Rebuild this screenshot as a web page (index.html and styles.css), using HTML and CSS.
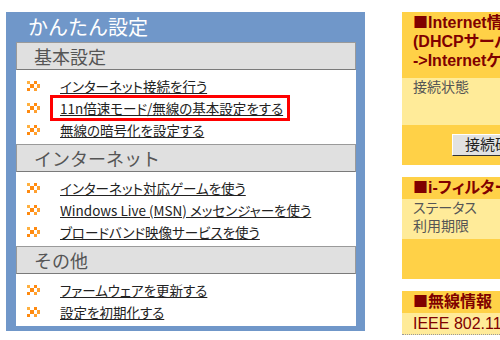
FILE: index.html
```html
<!DOCTYPE html>
<html lang="ja">
<head>
    <meta charset="UTF-8">
    <title>かんたん設定</title>
    <link rel="stylesheet" href="styles.css">
</head>
<body>
    <div class="page">
        <div class="easy">
            <div class="easy-title">かんたん設定</div>
            <div class="menu">
                <div class="sec">基本設定</div>
                <ul class="items">
                    <li><svg class="dot" viewBox="0 0 4 3"><rect x="0" y="0" width="1" height="1" fill="#ffb040"/><rect x="2" y="0" width="1" height="1" fill="#ff8a10"/><rect x="1" y="1" width="1" height="1" fill="#ff8a10"/><rect x="3" y="1" width="1" height="1" fill="#ffa030"/><rect x="0" y="2" width="1" height="1" fill="#ff8a10"/><rect x="2" y="2" width="1" height="1" fill="#ffa030"/></svg><a href="#">インターネット接続を行う</a></li>
                    <li><svg class="dot" viewBox="0 0 4 3"><rect x="0" y="0" width="1" height="1" fill="#ffb040"/><rect x="2" y="0" width="1" height="1" fill="#ff8a10"/><rect x="1" y="1" width="1" height="1" fill="#ff8a10"/><rect x="3" y="1" width="1" height="1" fill="#ffa030"/><rect x="0" y="2" width="1" height="1" fill="#ff8a10"/><rect x="2" y="2" width="1" height="1" fill="#ffa030"/></svg><span class="mark"><a href="#">11n倍速モード/無線の基本設定をする</a></span></li>
                    <li><svg class="dot" viewBox="0 0 4 3"><rect x="0" y="0" width="1" height="1" fill="#ffb040"/><rect x="2" y="0" width="1" height="1" fill="#ff8a10"/><rect x="1" y="1" width="1" height="1" fill="#ff8a10"/><rect x="3" y="1" width="1" height="1" fill="#ffa030"/><rect x="0" y="2" width="1" height="1" fill="#ff8a10"/><rect x="2" y="2" width="1" height="1" fill="#ffa030"/></svg><a href="#">無線の暗号化を設定する</a></li>
                </ul>
                <div class="sec">インターネット</div>
                <ul class="items">
                    <li><svg class="dot" viewBox="0 0 4 3"><rect x="0" y="0" width="1" height="1" fill="#ffb040"/><rect x="2" y="0" width="1" height="1" fill="#ff8a10"/><rect x="1" y="1" width="1" height="1" fill="#ff8a10"/><rect x="3" y="1" width="1" height="1" fill="#ffa030"/><rect x="0" y="2" width="1" height="1" fill="#ff8a10"/><rect x="2" y="2" width="1" height="1" fill="#ffa030"/></svg><a href="#">インターネット対応ゲームを使う</a></li>
                    <li><svg class="dot" viewBox="0 0 4 3"><rect x="0" y="0" width="1" height="1" fill="#ffb040"/><rect x="2" y="0" width="1" height="1" fill="#ff8a10"/><rect x="1" y="1" width="1" height="1" fill="#ff8a10"/><rect x="3" y="1" width="1" height="1" fill="#ffa030"/><rect x="0" y="2" width="1" height="1" fill="#ff8a10"/><rect x="2" y="2" width="1" height="1" fill="#ffa030"/></svg><a href="#">Windows Live (MSN) メッセンジャーを使う</a></li>
                    <li><svg class="dot" viewBox="0 0 4 3"><rect x="0" y="0" width="1" height="1" fill="#ffb040"/><rect x="2" y="0" width="1" height="1" fill="#ff8a10"/><rect x="1" y="1" width="1" height="1" fill="#ff8a10"/><rect x="3" y="1" width="1" height="1" fill="#ffa030"/><rect x="0" y="2" width="1" height="1" fill="#ff8a10"/><rect x="2" y="2" width="1" height="1" fill="#ffa030"/></svg><a href="#">ブロードバンド映像サービスを使う</a></li>
                </ul>
                <div class="sec">その他</div>
                <ul class="items">
                    <li><svg class="dot" viewBox="0 0 4 3"><rect x="0" y="0" width="1" height="1" fill="#ffb040"/><rect x="2" y="0" width="1" height="1" fill="#ff8a10"/><rect x="1" y="1" width="1" height="1" fill="#ff8a10"/><rect x="3" y="1" width="1" height="1" fill="#ffa030"/><rect x="0" y="2" width="1" height="1" fill="#ff8a10"/><rect x="2" y="2" width="1" height="1" fill="#ffa030"/></svg><a href="#">ファームウェアを更新する</a></li>
                    <li><svg class="dot" viewBox="0 0 4 3"><rect x="0" y="0" width="1" height="1" fill="#ffb040"/><rect x="2" y="0" width="1" height="1" fill="#ff8a10"/><rect x="1" y="1" width="1" height="1" fill="#ff8a10"/><rect x="3" y="1" width="1" height="1" fill="#ffa030"/><rect x="0" y="2" width="1" height="1" fill="#ff8a10"/><rect x="2" y="2" width="1" height="1" fill="#ffa030"/></svg><a href="#">設定を初期化する</a></li>
                </ul>
            </div>
        </div>

        <div class="side">
            <div class="box">
                <div class="box-head tall"><span class="sq">■</span>Internet情報<br>(DHCPサーバー)<br>-&gt;Internetケーブル</div>
                <div class="box-body">接続状態</div>
                <div class="box-foot"><button type="button">接続確認</button></div>
            </div>
            <div class="box">
                <div class="box-head"><span class="sq">■</span>i-フィルター</div>
                <div class="box-body short">ステータス<br>利用期限</div>
                <div class="box-foot"></div>
            </div>
            <div class="box">
                <div class="box-head"><span class="sq">■</span>無線情報</div>
                <div class="box-row">IEEE 802.11n</div>
            </div>
        </div>
    </div>
</body>
</html>
```

FILE: styles.css
```css
html, body {
    overflow: hidden;
}

body {
    margin: 0;
    background-color: #fff;
    font-family: "Noto Sans CJK JP", "Liberation Sans", sans-serif;
    font-feature-settings: "palt";
}

.page {
    display: flex;
    align-items: flex-start;
    width: 500px;
    height: 340px;
    overflow: hidden;
}

/* left: easy setup panel */
.easy {
    flex: none;
    width: 359px;
    margin: 12px 0 0 6px;
    padding: 0 9px 5px 10px;
    box-sizing: border-box;
    background-color: #7097c9;
}

.easy-title {
    height: 30px;
    line-height: 30px;
    padding-left: 12px;
    color: #fff;
    font-size: 20px;
    font-feature-settings: normal;
}

.menu {
    background-color: #fff;
}

.sec {
    height: 26px;
    line-height: 26px;
    padding-left: 17px;
    background-color: #e0e0e0;
    border: 1px solid #9a9a9a;
    border-bottom-color: #7a7a7a;
    color: #555;
    font-size: 18px;
    font-feature-settings: normal;
}

.items {
    list-style: none;
    margin: 0;
    padding: 5px 0 3px;
}

.items li {
    display: flex;
    align-items: center;
    height: 22px;
    padding-left: 11px;
    font-size: 13.5px;
}

.dot {
    flex: none;
    width: 13px;
    height: 10px;
    margin-right: 20px;
    shape-rendering: crispEdges;
}

.items a {
    color: #222;
    text-decoration: underline;
}

.mark {
    display: inline-block;
    line-height: 20px;
    margin-left: -10px;
    padding: 0 4px 0 7px;
    border: 3px solid #f00;
}

/* right: status boxes */
.side {
    flex: none;
    width: 200px;
    margin: 12px 0 0 37px;
    display: flex;
    flex-direction: column;
    gap: 12px;
    font-family: "Liberation Sans", "Noto Sans CJK JP", sans-serif;
}

.box-head {
    padding: 1px 10px 2px 11px;
    background-color: #ffd147;
    color: #800000;
    font-size: 16px;
    font-weight: bold;
    line-height: 19px;
    white-space: nowrap;
}

.box-head.tall {
    padding-bottom: 8px;
}

.sq {
    font-family: "Noto Sans CJK JP", sans-serif;
    font-size: 15px;
    line-height: 1;
}

.box-body {
    height: 47px;
    padding: 0 11px;
    background-color: #ffeb99;
    color: #555;
    font-size: 14px;
    line-height: 18px;
}

.box-body.short {
    height: 40px;
}

.box-foot {
    display: flex;
    align-items: center;
    height: 40px;
    padding-left: 50px;
    background-color: #ffd147;
}

.box-foot button {
    height: 22px;
    padding: 0 12px;
    background-color: #e2e2e2;
    border: 1px solid;
    border-color: #fff #333 #333 #fff;
    color: #222;
    font-family: inherit;
    font-size: 15px;
    line-height: 18px;
}

.box-row {
    height: 21px;
    line-height: 21px;
    padding: 0 11px;
    background-color: #ffeb99;
    border-bottom: 1px dotted #999;
    color: #800000;
    font-size: 16px;
    font-feature-settings: normal;
}
```
